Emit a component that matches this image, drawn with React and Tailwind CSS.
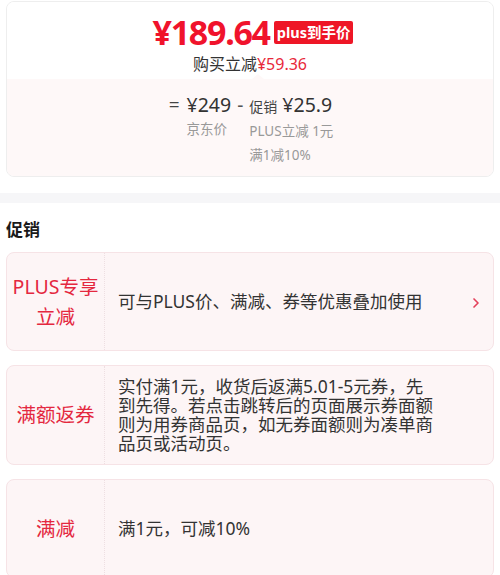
import { ChevronRight } from "lucide-react";

const font = { fontFamily: '"Noto Sans", "Noto Sans CJK SC", sans-serif' };

function PromoCard({ label, children, arrow }) {
  return (
    <div className="flex min-h-[99px] rounded-lg border border-[#f6e3e6] bg-[#fdf5f6]">
      <div className="flex w-[98px] shrink-0 items-center justify-center border-r border-dotted border-[#eedfe2] px-1 text-center text-[19.5px] leading-[30px] text-[#e4283f]">
        {label}
      </div>
      <div className="flex flex-1 items-center py-[11px] pl-[13px] pr-[9px]">
        <div className="max-w-[322px] flex-1 text-[17.5px] leading-[19px] text-[#333]">{children}</div>
        {arrow && <ChevronRight className="ml-auto mt-[2px] h-[16px] w-[16px] text-[#e4405a]" strokeWidth={2.5} />}
      </div>
    </div>
  );
}

export default function App() {
  return (
    <div className="w-[500px] h-[575px] overflow-hidden bg-white" style={font}>
      <div className="px-[6px] pt-[1px]">
        <div className="overflow-hidden rounded-lg border border-[#eeeeee]">
          {/* price block */}
          <div className="relative flex flex-col items-center bg-white pt-[11px] h-[77px]">
            <div className="flex h-[38px] items-center gap-[4px] pl-[6px]">
              <span className="text-[34px] font-bold leading-[38px] tracking-[-1.3px] text-[#f0132c]">¥189.64</span>
              <span className="mt-[1px] rounded-[2px] bg-[#ee1626] px-[3px] text-[14.5px] font-bold leading-[23px] text-white">plus到手价</span>
            </div>
            <div className="mt-[3px] text-[16px] leading-[20px] text-[#333]">
              购买立减<span className="text-[#e8283a]">¥59.36</span>
            </div>
            <div className="absolute bottom-0 left-[245px] h-0 w-0 border-x-[6px] border-b-[5px] border-x-transparent border-b-[#fef8f8]" />
          </div>
          {/* breakdown */}
          <div className="flex justify-center bg-[#fef8f8] pt-[14px] pb-[9px] pl-[2px]">
            <div className="flex items-start">
              <span className="mr-[7px] text-[19px] leading-[24px] text-[#444]">=</span>
              <div className="flex flex-col">
                <span className="text-[19.5px] leading-[24px] text-[#333]">¥249</span>
                <span className="text-[13.5px] leading-[24px] text-[#999]">京东价</span>
              </div>
              <span className="mx-[6px] text-[19px] leading-[24px] text-[#555]">-</span>
              <div className="flex flex-col">
                <span className="text-[19.5px] leading-[24px] text-[#333]">
                  <span className="text-[14px] text-[#444]">促销</span> ¥25.9
                </span>
                <span className="text-[13.5px] leading-[24px] text-[#999]">PLUS立减 1元</span>
                <span className="text-[13.5px] leading-[24px] text-[#999]">满1减10%</span>
              </div>
            </div>
          </div>
        </div>
      </div>

      <div className="mt-[16px] h-[10px] bg-[#f6f6f8]" />

      <div className="px-[6px]">
        <h2 className="pt-[16px] pb-[11px] text-[17px] font-bold leading-[22px] text-[#1a1a1a]">促销</h2>
        <div className="flex flex-col gap-[14px]">
          <PromoCard label={<>PLUS专享<br />立减</>} arrow>
            可与PLUS价、满减、券等优惠叠加使用
          </PromoCard>
          <PromoCard label="满额返券">
            实付满1元，收货后返满5.01-5元券，先到先得。若点击跳转后的页面展示券面额则为用券商品页，如无券面额则为凑单商品页或活动页。
          </PromoCard>
          <PromoCard label="满减">满1元，可减10%</PromoCard>
        </div>
      </div>
    </div>
  );
}
